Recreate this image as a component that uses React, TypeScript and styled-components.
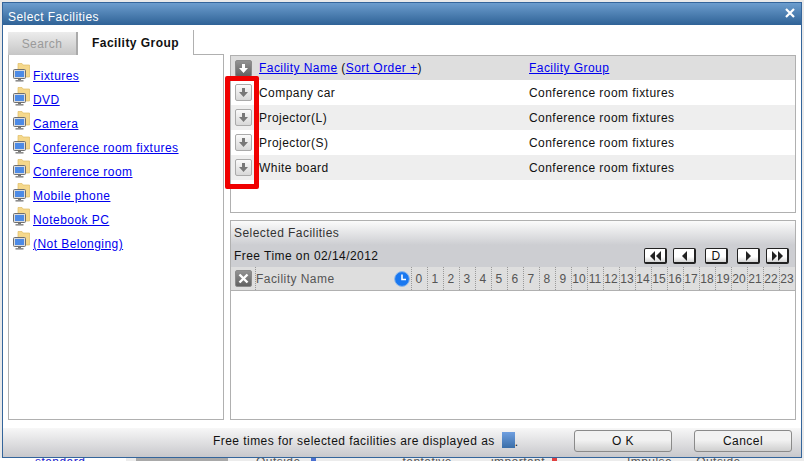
import React from 'react';
import styled, { createGlobalStyle } from 'styled-components';

const GlobalStyle = createGlobalStyle`
  html, body {
    margin: 0;
    padding: 0;
    background: #e9e9e9;
  }
  * {
    box-sizing: border-box;
  }
`;

const Page = styled.div`
  width: 804px;
  height: 461px;
  overflow: hidden;
  padding: 2px 2px 0;
  font-family: 'Liberation Sans', Arial, sans-serif;
  font-size: 12px;
  letter-spacing: 0.45px;
  color: #111;
`;

const Dialog = styled.div`
  width: 800px;
  height: 456px;
  border: 1px solid #34659b;
  background: #fff;
  display: flex;
  flex-direction: column;
`;

const TitleBar = styled.div`
  height: 22px;
  flex: none;
  background: linear-gradient(#6c9dce, #2f6296);
  color: #fff;
  display: flex;
  align-items: flex-start;
  justify-content: space-between;
  padding: 7px 6px 0 5px;
`;

const CloseIcon = styled.svg`
  margin-top: -2px;
`;

const Content = styled.div`
  flex: 1;
  min-height: 0;
  display: grid;
  grid-template-columns: 216px 6px 566px;
  padding: 6px 0 8px 5px;
`;

const LeftColumn = styled.div`
  display: flex;
  flex-direction: column;
  min-height: 0;
`;

const Tabs = styled.div`
  height: 24px;
  flex: none;
  display: flex;
  align-items: flex-end;
  border-bottom: 1px solid #b0b0b0;
`;

const SearchTab = styled.div`
  width: 70px;
  height: 23px;
  margin-bottom: -1px;
  background: linear-gradient(#ececec, #c6c6c6);
  border-right: 2px solid #aaa;
  color: #9a9a9a;
  display: flex;
  align-items: center;
  justify-content: center;
`;

const ActiveTab = styled.div`
  width: 116px;
  height: 25px;
  margin-bottom: -1px;
  background: #fff;
  border-right: 1px solid #b0b0b0;
  font-weight: bold;
  display: flex;
  align-items: center;
  justify-content: center;
`;

const GroupList = styled.ul`
  flex: 1;
  margin: 0;
  padding: 9px 0 0 4px;
  list-style: none;
  border: 1px solid #b0b0b0;
  border-top: none;
`;

const GroupItem = styled.li`
  height: 24px;
  display: flex;
  align-items: center;
  gap: 3px;
`;

const GroupGlyph = styled.svg`
  flex: none;
  margin-bottom: 8px;
`;

const Link = styled.a`
  color: #0000ee;
  text-decoration: underline;
`;

const VerticalGrip = styled.div`
  display: flex;
  align-items: flex-start;
  justify-content: center;
  &::before {
    content: '';
    width: 4px;
    height: 32px;
    margin-top: 178px;
    background-image: radial-gradient(#999 40%, transparent 45%);
    background-size: 2px 2px;
  }
`;

const RightColumn = styled.div`
  display: flex;
  flex-direction: column;
  min-height: 0;
  padding-top: 24px;
`;

const FacilityPanel = styled.div`
  height: 158px;
  flex: none;
  border: 1px solid #b0b0b0;
  position: relative;
`;

const FacilityHeader = styled.div`
  height: 24px;
  background: #dedede;
  display: grid;
  grid-template-columns: 28px 270px 1fr;
  align-items: center;
`;

const FacilityRow = styled.div<{ $shaded: boolean }>`
  height: 25px;
  background: ${(p) => (p.$shaded ? '#eeeeee' : '#fff')};
  display: grid;
  grid-template-columns: 28px 270px 1fr;
  align-items: center;
`;

const ButtonCell = styled.div`
  display: flex;
  padding-left: 4px;
`;

const ArrowButton = styled.div<{ $dark?: boolean }>`
  width: 17px;
  height: 17px;
  border-radius: 2px;
  border: 1px solid ${(p) => (p.$dark ? '#8a8a8a' : '#aaa')};
  background: ${(p) =>
    p.$dark
      ? 'linear-gradient(#929292, #626262)'
      : 'linear-gradient(#fafafa, #d8d8d8)'};
  display: flex;
  align-items: center;
  justify-content: center;
`;

const Highlight = styled.div`
  position: absolute;
  left: -6px;
  top: 20px;
  width: 34px;
  height: 113px;
  border: 5px solid #f00000;
  border-radius: 2px;
  pointer-events: none;
`;

const HorizontalGrip = styled.div`
  height: 7px;
  flex: none;
  display: flex;
  align-items: flex-start;
  justify-content: center;
  &::before {
    content: '';
    width: 32px;
    height: 4px;
    margin-top: 1px;
    background-image: radial-gradient(#999 40%, transparent 45%);
    background-size: 2px 2px;
  }
`;

const SelectedPanel = styled.div`
  flex: 1;
  border: 1px solid #b0b0b0;
  display: flex;
  flex-direction: column;
`;

const SelectedTitle = styled.div`
  height: 24px;
  flex: none;
  background: linear-gradient(#fbfbfb, #cdced2);
  color: #333;
  display: flex;
  align-items: center;
  padding-left: 3px;
`;

const FreeTimeBar = styled.div`
  height: 22px;
  flex: none;
  background: #cdced2;
  display: flex;
  align-items: center;
  justify-content: space-between;
  padding: 0 6px 0 3px;
`;

const NavGroup = styled.div`
  display: flex;
  align-items: center;
`;

const NavButton = styled.div<{ $gap: number }>`
  width: 23px;
  height: 16px;
  margin-left: ${(p) => p.$gap}px;
  border: 1px solid #222;
  border-right-width: 2px;
  border-bottom-width: 2px;
  border-radius: 2px;
  background: linear-gradient(#fff 60%, #d4d4d4);
  display: flex;
  align-items: center;
  justify-content: center;
  font-size: 12px;
  line-height: 1;
  color: #111;
`;

const HoursHeader = styled.div`
  height: 24px;
  flex: none;
  background: #dedede;
  border-bottom: 1px solid #b0b0b0;
  display: flex;
  align-items: center;
  color: #555;
`;

const ClearCell = styled.div`
  width: 25px;
  height: 100%;
  flex: none;
  display: flex;
  align-items: center;
  justify-content: center;
  border-right: 1px dotted #999;
`;

const NameHeading = styled.div`
  flex: 1;
  padding-top: 1px;
`;

const ClockCell = styled.div`
  width: 18px;
  flex: none;
  display: flex;
  justify-content: center;
`;

const HourCell = styled.div`
  width: 16px;
  height: 100%;
  flex: none;
  border-left: 1px dotted #999;
  padding: 1px 1px 0 0;
  display: flex;
  align-items: center;
  justify-content: center;
  letter-spacing: 0.1px;
`;

const Footer = styled.div`
  height: 29px;
  flex: none;
  background: linear-gradient(#f7f7f7, #c8c8cc);
  display: flex;
  align-items: center;
  padding: 0 0 4px 210px;
`;

const FooterNote = styled.div`
  display: flex;
  align-items: center;
  gap: 7px;
  width: 361px;
`;

const Swatch = styled.span`
  display: inline-block;
  width: 13px;
  height: 16px;
  vertical-align: -2px;
  background: linear-gradient(#6f9fe0, #3a6ea8);
`;

const DialogButton = styled.button<{ $gap: number }>`
  width: 98px;
  height: 22px;
  margin-left: ${(p) => p.$gap}px;
  border: 1px solid #8a8a8a;
  border-radius: 3px;
  background: linear-gradient(#f2f2f2 45%, #cfcfcf);
  font: inherit;
  letter-spacing: inherit;
  color: #111;
  padding: 0;
`;

const BackgroundStrip = styled.div`
  height: 3px;
  margin: 0 -2px;
  display: flex;
  background: #fff;
  overflow: hidden;
  line-height: 8px;
  color: #555;
`;

const StripLink = styled.div`
  width: 126px;
  padding-left: 35px;
  color: #2222cc;
`;

const StripGap = styled.div`
  width: 10px;
  background: #ececec;
`;

const StripBlock = styled.div`
  width: 92px;
  background: #a9a9a9;
`;

const StripItems = styled.div`
  flex: 1;
  background: #ececec;
  display: flex;
  white-space: nowrap;
`;

const StripLabel = styled.span<{ $gap: number }>`
  margin-left: ${(p) => p.$gap}px;
`;

const StripMark = styled.span<{ $gap: number; $color: string }>`
  width: 5px;
  height: 3px;
  flex: none;
  margin-left: ${(p) => p.$gap}px;
  background: ${(p) => p.$color};
`;

const groups = [
  'Fixtures',
  'DVD',
  'Camera',
  'Conference room fixtures',
  'Conference room',
  'Mobile phone',
  'Notebook PC',
  '(Not Belonging)',
];

const facilities = ['Company car', 'Projector(L)', 'Projector(S)', 'White board'];
const hours = Array.from({ length: 24 }, (_, i) => i);

function GroupIcon() {
  return (
    <GroupGlyph width="17" height="19" viewBox="0 0 17 19">
      <path d="M5 0.5h4l1 1.5h6.5v12H5z" fill="#f5d88c" stroke="#e0bd66" strokeWidth="0.7" />
      <rect x="0.5" y="6.5" width="12" height="9" rx="1" fill="#dcdcdc" stroke="#6e6e6e" />
      <rect x="2" y="8" width="9" height="6" fill="#4d8be6" />
      <rect x="5" y="16" width="3" height="1" fill="#777" />
      <rect x="2.5" y="17" width="8" height="1.6" fill="#8c8c8c" />
    </GroupGlyph>
  );
}

function DownArrow({ color }: { color: string }) {
  return (
    <svg width="11" height="11" viewBox="0 0 11 11">
      <path d="M4 1h3v4h3L5.5 10 1 5h3z" fill={color} />
    </svg>
  );
}

function ClearIcon() {
  return (
    <svg width="11" height="11" viewBox="0 0 11 11">
      <path d="M1.5 1.5l8 8M9.5 1.5l-8 8" stroke="#fff" strokeWidth="2.4" />
    </svg>
  );
}

function ClockIcon() {
  return (
    <svg width="16" height="16" viewBox="0 0 16 16">
      <circle cx="8" cy="8" r="7.4" fill="#1a78f0" stroke="#8fb8ea" />
      <path d="M8 3.5V8.5H12" fill="none" stroke="#fff" strokeWidth="1.6" />
    </svg>
  );
}

function NavTriangles({ dir, count }: { dir: 'left' | 'right'; count: number }) {
  const shapes = dir === 'left' ? ['M6 0v10L1 5z', 'M12 0v10L7 5z'] : ['M1 0v10l5-5z', 'M7 0v10l5-5z'];
  return (
    <svg width={count === 2 ? 13 : 7} height="10" viewBox={count === 2 ? '0 0 13 10' : '0 0 7 10'}>
      {shapes.slice(0, count).map((d) => (
        <path key={d} d={d} fill="#222" />
      ))}
    </svg>
  );
}

export default function App() {
  return (
    <Page>
      <GlobalStyle />
      <Dialog>
        <TitleBar>
          <span>Select Facilities</span>
          <CloseIcon width="10" height="10" viewBox="0 0 10 10">
            <path d="M1 1l8 8M9 1l-8 8" stroke="#fff" strokeWidth="2.2" />
          </CloseIcon>
        </TitleBar>

        <Content>
          <LeftColumn>
            <Tabs>
              <SearchTab>Search</SearchTab>
              <ActiveTab>Facility Group</ActiveTab>
            </Tabs>
            <GroupList>
              {groups.map((g) => (
                <GroupItem key={g}>
                  <GroupIcon />
                  <Link>{g}</Link>
                </GroupItem>
              ))}
            </GroupList>
          </LeftColumn>

          <VerticalGrip />

          <RightColumn>
            <FacilityPanel>
              <FacilityHeader>
                <ButtonCell>
                  <ArrowButton $dark>
                    <DownArrow color="#fff" />
                  </ArrowButton>
                </ButtonCell>
                <span>
                  <Link>Facility Name</Link> (<Link>Sort Order +</Link>)
                </span>
                <Link>Facility Group</Link>
              </FacilityHeader>
              {facilities.map((f, i) => (
                <FacilityRow key={f} $shaded={i % 2 === 1}>
                  <ButtonCell>
                    <ArrowButton>
                      <DownArrow color="#777" />
                    </ArrowButton>
                  </ButtonCell>
                  <span>{f}</span>
                  <span>Conference room fixtures</span>
                </FacilityRow>
              ))}
              <Highlight />
            </FacilityPanel>

            <HorizontalGrip />

            <SelectedPanel>
              <SelectedTitle>Selected Facilities</SelectedTitle>
              <FreeTimeBar>
                <span>Free Time on 02/14/2012</span>
                <NavGroup>
                  <NavButton $gap={0}>
                    <NavTriangles dir="left" count={2} />
                  </NavButton>
                  <NavButton $gap={6}>
                    <NavTriangles dir="left" count={1} />
                  </NavButton>
                  <NavButton $gap={9}>D</NavButton>
                  <NavButton $gap={9}>
                    <NavTriangles dir="right" count={1} />
                  </NavButton>
                  <NavButton $gap={6}>
                    <NavTriangles dir="right" count={2} />
                  </NavButton>
                </NavGroup>
              </FreeTimeBar>
              <HoursHeader>
                <ClearCell>
                  <ArrowButton $dark>
                    <ClearIcon />
                  </ArrowButton>
                </ClearCell>
                <NameHeading>Facility Name</NameHeading>
                <ClockCell>
                  <ClockIcon />
                </ClockCell>
                {hours.map((h) => (
                  <HourCell key={h}>{h}</HourCell>
                ))}
              </HoursHeader>
            </SelectedPanel>
          </RightColumn>
        </Content>

        <Footer>
          <FooterNote>
            Free times for selected facilities are displayed as
            <span>
              <Swatch />.
            </span>
          </FooterNote>
          <DialogButton $gap={0}>O K</DialogButton>
          <DialogButton $gap={22}>Cancel</DialogButton>
        </Footer>
      </Dialog>
      <BackgroundStrip>
        <StripLink>standard</StripLink>
        <StripGap />
        <StripBlock />
        <StripItems>
          <StripLabel $gap={28}>Outside</StripLabel>
          <StripMark $gap={10} $color="#4a6fd0" />
          <StripLabel $gap={87}>tentative</StripLabel>
          <StripLabel $gap={39}>important</StripLabel>
          <StripMark $gap={7} $color="#e04040" />
          <StripLabel $gap={70}>Impulse</StripLabel>
          <StripLabel $gap={24}>Outside</StripLabel>
        </StripItems>
      </BackgroundStrip>
    </Page>
  );
}
